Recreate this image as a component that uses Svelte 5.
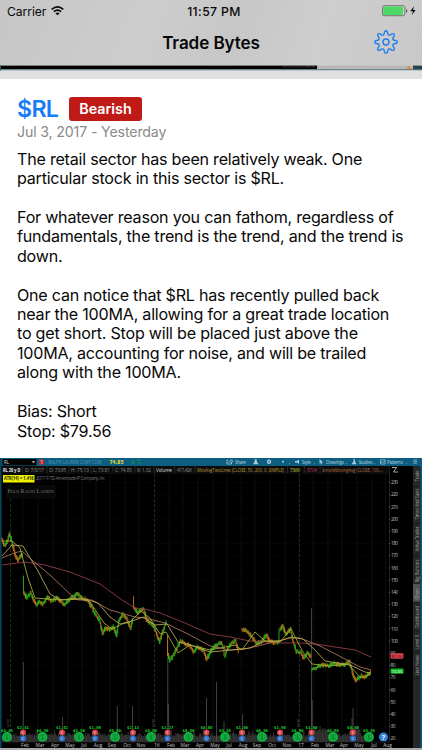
<script>
	const paragraphs = [
		['The retail sector has been relatively weak. One', 'particular stock in this sector is $RL.'],
		['For whatever reason you can fathom, regardless of', 'fundamentals, the trend is the trend, and the trend is', 'down.'],
		[
			'One can notice that $RL has recently pulled back',
			'near the 100MA, allowing for a great trade location',
			'to get short. Stop will be placed just above the',
			'100MA, accounting for noise, and will be trailed',
			'along with the 100MA.'
		],
		['Bias: Short', 'Stop: $79.56']
	];

	// price path, one list per stretch between gaps
	const price = [
		[[2, 540], [5, 546], [8, 541], [10, 534], [12, 541], [14, 548], [16, 556], [19, 560], [21, 556], [23, 554]],
		[[23.5, 577], [24, 592], [27, 598], [31, 593], [34, 600], [37, 605], [40, 602], [43, 604], [48, 597], [52, 601], [58, 598], [62, 601], [65, 605], [70, 599], [74, 597], [77, 593], [82, 598], [88, 600], [92, 607], [96, 614], [100, 620], [103, 634], [106, 628], [111, 630], [114, 627], [117, 635], [119, 622], [123, 614], [127, 619], [131, 628], [133, 620]],
		[[133.5, 597], [134.5, 607], [138, 613], [141, 610], [144, 609], [147, 620], [152, 624], [155, 628], [160, 642], [163, 632], [167, 622]],
		[[167.5, 636], [168.5, 654], [170, 661], [174, 655], [178, 647], [181, 641], [186, 644], [190, 645], [194, 652], [198, 647], [204, 650], [207, 659], [212, 650], [217, 645], [221, 643], [223, 645]],
		[[224, 647], [225, 656], [228, 649], [232, 643], [236, 641], [239, 651]],
		[[242, 630], [247, 631], [252, 637], [257, 643], [262, 642], [267, 635], [270, 641], [275, 643], [279, 642], [280, 630], [283, 625], [286, 634], [291, 629], [293, 640], [297, 652], [301, 652], [304, 658], [308, 653], [311.5, 657]],
		[[312, 669], [316, 668], [322, 665], [330, 666], [335, 663], [340, 665], [346, 664], [350, 661], [352, 669], [354, 677], [356, 681], [359, 678], [362, 676], [366, 677], [371, 672]]
	];

	const averages = [
		{ color: '#98404c', points: '2,565 25,562 45,565 70,572 100,584 122,600 135,608 145,609 160,613 185,623 210,634 230,637 250,641 281,643 300,643 315,644 335,647 355,650 371,657' },
		{ color: '#b0785a', points: '2,558 14,553 22,551 32,560 50,575 70,594 78,600 92,600 110,610 135,617 145,618 165,623 190,635 210,646 230,650 245,649 270,643 290,638 300,638 320,646 345,659 360,667 371,670' },
		{ color: '#beae58', points: '2,556 12,545 23,546 38,571 50,594 60,600 85,599 98,603 110,617 120,624 135,620 143,617 155,625 167,624 178,642 190,645 210,652 232,650 250,648 265,641 280,641 291,637 303,639 315,650 325,661 350,665 365,672 371,673' },
		{ color: '#a9b433', points: '2,541 12,541 20,548 28,578 35,598 60,600 80,598 90,602 104,623 112,629 122,624 130,622 141,611 150,618 160,634 166,632 178,653 190,645 210,650 235,645 242,650 255,632 265,641 280,642 291,629 303,652 312,664 330,666 348,664 361,678 371,674' }
	];

	let seed = 11;
	function random() {
		seed = (seed * 16807) % 2147483647;
		return seed / 2147483647;
	}

	const candles = [];
	for (const stretch of price) {
		for (let i = 1; i < stretch.length; i++) {
			const [x0, y0] = stretch[i - 1];
			const [x1, y1] = stretch[i];
			const steps = Math.max(1, Math.round((x1 - x0) / 0.75));
			for (let s = 0; s < steps; s++) {
				const y = y0 + ((y1 - y0) * (s + 0.5)) / steps + (random() - 0.5) * 2;
				const half = 1.1 + random() + Math.abs(y1 - y0) / steps / 2;
				const falling = y1 > y0 ? random() < 0.68 : random() < 0.22;
				candles.push({ x: x0 + ((x1 - x0) * s) / steps, top: y - half, bottom: y + half, color: falling ? '#df801c' : '#28cc20' });
			}
		}
	}

	const volume = [];
	for (let x = 2; x < 371; x += 0.8) {
		volume.push({ x, h: 5 + random() * 4 + (random() > 0.9 ? 4 : 0) + (x > 309 && x < 327 ? 5 : 0) + (x > 350 && x < 360 ? 6 : 0) });
	}
	const spikes = [[23.3, 662], [62.5, 717], [117.3, 706], [132.5, 706], [167.7, 640], [168.4, 704], [206.5, 698], [216.5, 682], [224, 721], [242.5, 714], [311.5, 608], [312.2, 700], [353, 708], [352, 718]];

	const months = [['Feb', 25], ['Mar', 40], ['Apr', 55], ['May', 70], ['Jul', 84], ['Aug', 98], ['Sep', 112], ['Oct', 127], ['Nov', 141], ['16', 157], ['Feb', 171], ['Mar', 185], ['Apr', 200], ['May', 215], ['Jul', 229], ['Aug', 243], ['Sep', 257], ['Oct', 272], ['Nov', 287], ['17', 301], ['Feb', 315], ['Mar', 330], ['Apr', 344], ['May', 359], ['Jul', 374], ['Aug', 387.5]];
	const levels = Array.from({ length: 22 }, (_, i) => ({ value: 230 - i * 10, y: 482.5 + i * 12.2 }));
	const dividends = [[7, '$0.45'], [42.5, '$0.50'], [79, '$0.50'], [115, '$0.50'], [151, '$0.50'], [188.5, '$0.50'], [225, '$0.50'], [262, '$0.50'], [297.5, '$0.50'], [333, '$0.50'], [369, '$0.50']];
	const earnings = [[23, '$2.41'], [62, '$1.41'], [95, '$1.09'], [133, '$2.13'], [167.5, '$2.27'], [206.5, '$0.88'], [242, '$1.06'], [280, '$1.90'], [311.5, '$1.86'], [353, '$0.89']];
	const sidebar = [['Trade', 476, 11], ['Times And Sales', 504, 31], ['Active Trader', 539, 25], ['Big Buttons', 571, 23], ['Chart', 594, 11], ['Dashboard', 617, 22], ['Level II', 642, 14], ['Live News', 665, 20]];

	const gear = Array.from({ length: 8 }, (_, i) => {
		const at = (deg, r) => {
			const a = ((i * 45 + deg) * Math.PI) / 180;
			return `${(r * Math.sin(a)).toFixed(2)} ${(-r * Math.cos(a)).toFixed(2)}`;
		};
		return `${i ? 'L' : 'M'}${at(-9, 10)}Q${at(-6, 11.2)} ${at(0, 11.2)}Q${at(6, 11.2)} ${at(9, 10)}L${at(12, 8.6)}Q${at(22.5, 6.6)} ${at(33, 8.6)}`;
	}).join('') + 'Z';
</script>

<div class="screen">
	<header>
		<div class="status">
			<div class="carrier">
				<span>Carrier</span>
				<svg width="13" height="10" viewBox="0 0 13 10" fill="none" stroke="#050505" stroke-width="1.6">
					<path d="M.7 3.3Q6.5-1.6 12.3 3.3" />
					<path d="M2.8 5.6Q6.5 2.5 10.2 5.6" />
					<path d="M6.5 9.3 4.3 7.3Q6.5 5.5 8.7 7.3Z" fill="#050505" stroke="none" />
				</svg>
			</div>
			<span class="time">11:57 PM</span>
			<svg class="battery" width="36" height="12" viewBox="0 0 36 12">
				<rect x=".5" y=".7" width="22.4" height="10" rx="1.6" fill="none" stroke="#777" />
				<rect x="1.3" y="1.5" width="19.6" height="8.4" rx=".7" fill="#4cd964" />
				<path d="M24 4v3.7q1.3-.5 1.3-1.8T24 4z" fill="#555" />
				<path d="M32 1.3 28.3 6.2H31l-1.2 4L33.6 5H31z" fill="#050505" />
			</svg>
		</div>
		<div class="nav">
			<h1>Trade Bytes</h1>
			<svg class="gear" width="24" height="24" viewBox="-12 -12 24 24" fill="none" stroke="#1c7cf0" stroke-width="1.4" stroke-linejoin="round">
				<path d={gear} />
				<circle r="3" />
			</svg>
		</div>
	</header>

	<svg class="previous" width="422" height="14" viewBox="0 65 422 14">
		<rect y="65" width="422" height="14" fill="#e0e0e2" />
		<rect y="65" width="422" height=".8" fill="#c8c8c8" />
		<rect y="65.6" width="317" height="3.6" fill="#000" />
		<rect x="282" y="66.3" width="33" height="1.2" fill="#272727" />
		<path d="M308 66h1.4m3.5 0h1" stroke="#777" />
		<rect x="317" y="65.6" width="96" height="3.8" fill="#b6b6b6" />
		<rect x="413" y="65.6" width="9" height="4.4" fill="#29434e" />
		<path d="M406 69.6 409 65.8l3 3.8z" fill="#e88832" />
		<rect y="69.2" width="422" height="1" fill="#557987" />
		<rect y="70.2" width="422" height=".8" fill="#b7c4c9" />
		<rect y="65.6" width="1" height="5" fill="#2d6076" />
	</svg>

	<article>
		<div class="heading">
			<span class="ticker">$RL</span>
			<span class="badge">Bearish</span>
		</div>
		<div class="date">Jul 3, 2017 - Yesterday</div>
		<div class="body">
			{#each paragraphs as lines}
				<p>
					{#each lines as line}<span>{line}</span>{/each}
				</p>
			{/each}
		</div>
	</article>

	<svg class="chart" width="422" height="292" viewBox="0 458 422 292">
		<rect y="458" width="422" height="292" fill="#000" />
		<rect y="458" width="422" height="8" fill="#0d5d80" />
		<rect y="458" width="1.6" height="290" fill="#0b4258" />
		<rect x="2.5" y="459" width="34" height="6.4" fill="#000" />
		<text x="4" y="463.8" fill="#ddd" textLength="5">RL</text>
		<path d="M32 461.3h3l-1.5 2z" fill="#ddd" />
		<rect x="39" y="459.2" width="5" height="5.6" rx="1" fill="#b22c34" />
		<text x="40.6" y="463.5" fill="#fff">1</text>
		<text x="48.5" y="463.8" fill="#5397b4" font-size="5" textLength="53" lengthAdjust="spacingAndGlyphs">RALPH LAUREN CORP COM</text>
		<text x="109.5" y="464" fill="#e8dc38" font-size="5.6" font-weight="bold" textLength="14" lengthAdjust="spacingAndGlyphs">74.85</text>
		<path d="M131 461h3m-3 2h4m2-3h4m-3 3h3" stroke="#15925b" stroke-width="1.2" />

		<g fill="#a9cad8" font-size="4.8">
			<path d="M228 460h-1v4h4.5v-1.6M229 462.5q0-1.8 2-1.8v-1l2 1.6-2 1.6v-1" fill="none" stroke="#a9cad8" stroke-width=".8" />
			<text x="235" y="463.7" textLength="11">Share</text>
			<path d="M254.7 459.2h2v2l1.8 3h-5.4l1.6-3z" />
			<circle cx="269" cy="461.7" r="1.5" fill="none" stroke="#a9cad8" stroke-width="1.4" />
			<circle cx="283" cy="461.7" r="1" />
			<path d="M295 461h2l2-1.5v4.5l-2-1.5h-2z" />
			<text x="302" y="463.7" textLength="9">Style</text>
			<path d="m319.5 459 3.5 3.3h-1.5l.8 1.7-1 .4-.8-1.7-1 1z" />
			<text x="326" y="463.7" textLength="18">Drawings</text>
			<path d="M353.5 459.2h1.5v2l1.5 3h-4.8l1.8-3z" />
			<text x="358.5" y="463.7" textLength="14">Studies</text>
			<path d="M380.5 464v-4.2h4.6v4.2zm0-1 1.6-1.5 1 1 2-2" fill="none" stroke="#a9cad8" stroke-width=".7" />
			<text x="387" y="463.7" textLength="16">Patterns</text>
			<path d="M413.5 460h3.5m-3.5 1.6h3.5m-3.5 1.6h3.5" stroke="#a9cad8" stroke-width=".7" />
			<path d="m289 463 1 1h-1zm25 0 1 1h-1zm32 0 1 1h-1zm28 0 1 1h-1zm32 0 1 1h-1z" />
		</g>

		<rect x="1.6" y="466" width="388" height="8" fill="#0c0c0c" />
		<g font-size="4.7" fill="#8d8d8d">
			<text x="3" y="471.6" fill="#eee" font-weight="bold" textLength="17.5" lengthAdjust="spacingAndGlyphs">RL 20 y D</text>
			<text x="25" y="471.6" textLength="19">D: 7/3/17</text>
			<text x="49" y="471.6" textLength="17">O: 73.95</text>
			<text x="71" y="471.6" textLength="18">H: 75.13</text>
			<text x="93" y="471.6" textLength="17">L: 73.81</text>
			<text x="115" y="471.6" textLength="17">C: 74.85</text>
			<text x="137" y="471.6" textLength="14">R: 1.32</text>
			<text x="156" y="471.6" fill="#ddd" textLength="16">Volume</text>
			<text x="177" y="471.6" textLength="15">417,426</text>
			<text x="197" y="471.6" fill="#bd9538" textLength="87" lengthAdjust="spacingAndGlyphs">MovAvgTwoLines (CLOSE, 50, 200, 0, SIMPLE)</text>
			<text x="290" y="471.6" fill="#c8c644" textLength="10">73.66</text>
			<text x="307" y="471.6" fill="#ad3c50" textLength="10">87.04</text>
			<text x="322" y="471.6" fill="#b27042" textLength="61" lengthAdjust="spacingAndGlyphs">SimpleMovingAvg (CLOSE, 100,...</text>
		</g>
		<path d="M22.5 466v7M47 466v7M69 466v7M91 466v7M113 466v7M135 466v7M154 466v7M174.5 466v7M195 466v7M287.5 466v7M304.5 466v7M320 466v7" stroke="#353535" stroke-width=".6" />

		<g stroke="#141414" stroke-width=".6">
			{#each levels as level}
				<path d="M2 {level.y}H389" stroke-dasharray="1 1.5" />
			{/each}
			{#each months as [, x]}
				<path d="M{x - 2} 474V742" />
			{/each}
		</g>
		<path d="M10.5 474V742" stroke="#40391f" stroke-width=".7" stroke-dasharray="3 2" />
		<path d="M154.5 474V742M299.5 474V742" stroke="#333" stroke-width=".7" stroke-dasharray="3 2" />
		<g font-size="4" fill="#555">
			<text transform="translate(9 727) rotate(-90)">year</text>
			<text transform="translate(154 727) rotate(-90)">year</text>
			<text transform="translate(298.5 727) rotate(-90)">year</text>
		</g>

		<rect x="3" y="475" width="31.5" height="7.5" fill="#f0f000" />
		<text x="4" y="480.3" font-size="4.6" font-weight="bold" fill="#141400" textLength="29.5" lengthAdjust="spacingAndGlyphs">ATR(14) = 1.416</text>
		<text x="36" y="480.2" font-size="4.6" fill="#707070" textLength="69">2017 © TD Ameritrade IP Company, Inc</text>
		<rect x="6" y="485" width="50" height="14" fill="#080808" />
		<text class="brand" x="7.5" y="492.8" textLength="46.5" lengthAdjust="spacingAndGlyphs">Polo Ralph Lauren</text>

		{#each volume as bar}
			<rect x={bar.x} y={742 - bar.h} width=".85" height={bar.h} fill="#3b3b3b" />
		{/each}
		{#each spikes as [x, top]}
			<path d="M{x} {top}V742" stroke="#505050" stroke-width=".8" />
		{/each}

		{#each candles as c}
			<path d="M{c.x} {c.top}V{c.bottom}" stroke={c.color} stroke-width=".8" />
		{/each}
		{#each averages as line}
			<polyline points={line.points} fill="none" stroke={line.color} stroke-width=".85" stroke-linejoin="round" />
		{/each}

		{#each dividends as [x, amount]}
			<circle cx={x} cy="737" r="4.9" fill="#14b844" />
			<circle cx={x} cy="737" r="3" fill="none" stroke="#0a7a2b" stroke-width=".6" />
			<text {x} y="738.7" font-size="4.5" fill="#06521b" text-anchor="middle">$</text>
			<text class="amount" {x} y="732">{amount}</text>
		{/each}
		{#each earnings as [x, amount]}
			<circle cx={x} cy="732.4" r="3" fill="#d04448" />
			<circle cx={x} cy="738.5" r="3" fill="#2c70cc" />
			<text {x} y="733.7" font-size="3.6" fill="#eee" text-anchor="middle">E</text>
			<text {x} y="739.8" font-size="3.6" fill="#eee" text-anchor="middle">C</text>
			<text class="amount" {x} y="729">{amount}</text>
		{/each}
		<circle cx="383.5" cy="737" r="4.5" fill="#3185dc" />
		<text x="383.5" y="739.5" font-size="7" font-weight="bold" fill="#fff" text-anchor="middle">?</text>

		<path d="M389.5 466V742M2 742H389.5" stroke="#303030" stroke-width=".6" />
		<path d="M392 467.5h4.5l-3 4.5h4.5" fill="none" stroke="#ccc" stroke-width=".8" />
		{#each levels as level}
			<path d="M389 {level.y}h1.6" stroke="#777" stroke-width=".6" />
			<text x={level.value < 100 ? 390.5 : 391} y={level.y + 1.6} font-size="4.8" fill="#bbb" textLength={level.value < 100 ? 5 : 7}>{level.value}</text>
		{/each}
		<rect x="390.5" y="653.3" width="13" height="5.4" rx="1" fill="#da424c" />
		<text x="391.5" y="657.6" font-size="4.3" fill="#30080b" textLength="11">87.04</text>
		<rect x="390.5" y="668.4" width="13" height="5.4" rx="1" fill="#10ba28" />
		<text x="391.5" y="672.7" font-size="4.3" fill="#e0ffe2" textLength="11">74.85</text>

		{#each months as [name, x]}
			<text {x} y="746.8" font-size="4.8" fill="#c2c2c2" text-anchor="middle">{name}</text>
		{/each}

		<rect x="413" y="466" width="7.3" height="282" fill="#272727" />
		<rect x="413" y="584" width="7.3" height="18" fill="#535353" />
		<rect x="420.3" y="466" width="1.7" height="282" fill="#0d5d80" />
		<path d="M413 486.5h7M413 523.5h7M413 556h7M413 602h7M413 631h7M413 652h7M413 678h7" stroke="#111" stroke-width=".6" />
		{#each sidebar as [name, y, length]}
			<text transform="translate(418.5 {y}) rotate(-90)" font-size="4.8" fill="#a0a0a0" text-anchor="middle" textLength={length} lengthAdjust="spacingAndGlyphs">{name}</text>
		{/each}
		<rect y="748" width="422" height="2" fill="#aaa" />
	</svg>
</div>

<style>
	:global(body) {
		margin: 0;
		overflow: hidden;
	}
	.screen {
		width: 422px;
		height: 750px;
		display: flex;
		flex-direction: column;
		overflow: hidden;
		background: #fff;
		color: #080808;
		font-family: Inter, 'Liberation Sans', sans-serif;
	}
	svg {
		display: block;
		flex: none;
	}
	header {
		height: 65px;
		flex: none;
		background: linear-gradient(110deg, #c6c6c6, #cdcdcd 35%, #c7c7c7 55%, #cecece 75%, #c8c8c8);
	}
	.status {
		height: 22px;
		display: grid;
		grid-template-columns: 1fr auto 1fr;
		align-items: center;
		padding: 0 4px 0 7px;
		font-size: 12.2px;
	}
	.carrier {
		display: flex;
		align-items: center;
		gap: 5px;
		letter-spacing: -0.1px;
	}
	.time {
		margin-left: 3px;
		font-weight: 500;
		letter-spacing: 0.4px;
	}
	.battery {
		justify-self: end;
	}
	.nav {
		height: 43px;
		display: grid;
		grid-template-columns: 1fr auto 1fr;
		align-items: center;
		padding: 0 24px;
	}
	h1 {
		grid-column: 2;
		margin: 0 0 2px;
		font-size: 17.1px;
		font-weight: 600;
		letter-spacing: -0.1px;
	}
	.gear {
		justify-self: end;
		margin-bottom: 3px;
	}
	article {
		height: 362px;
		flex: none;
		padding: 17px 0 0 17px;
	}
	.heading {
		display: flex;
		align-items: center;
		gap: 11px;
		height: 26px;
	}
	.ticker {
		width: 41px;
		font-size: 23.2px;
		font-weight: 600;
		letter-spacing: -0.7px;
		color: #177cf5;
	}
	.badge {
		width: 73px;
		height: 24px;
		line-height: 24px;
		border-radius: 3px;
		background: #c01a17;
		color: #fff;
		font-size: 14.3px;
		font-weight: 600;
		text-align: center;
	}
	.date {
		height: 27.5px;
		line-height: 19px;
		font-size: 14.2px;
		letter-spacing: -0.16px;
		color: #8a8a8a;
	}
	.body {
		display: flex;
		flex-direction: column;
		gap: 19.43px;
		font-size: 16.1px;
		line-height: 19.43px;
		letter-spacing: -0.23px;
	}
	p {
		margin: 0;
	}
	p span {
		display: block;
		white-space: nowrap;
	}
	.chart {
		font-family: 'Open Sans', 'Noto Sans', sans-serif;
		font-size: 4.4px;
	}
	.brand {
		font-family: 'Liberation Serif', serif;
		font-size: 7px;
		font-variant: small-caps;
		fill: #777;
	}
	.amount {
		font-family: 'DejaVu Sans Mono', monospace;
		font-size: 4px;
		font-weight: bold;
		fill: #18d028;
		text-anchor: middle;
	}
</style>
